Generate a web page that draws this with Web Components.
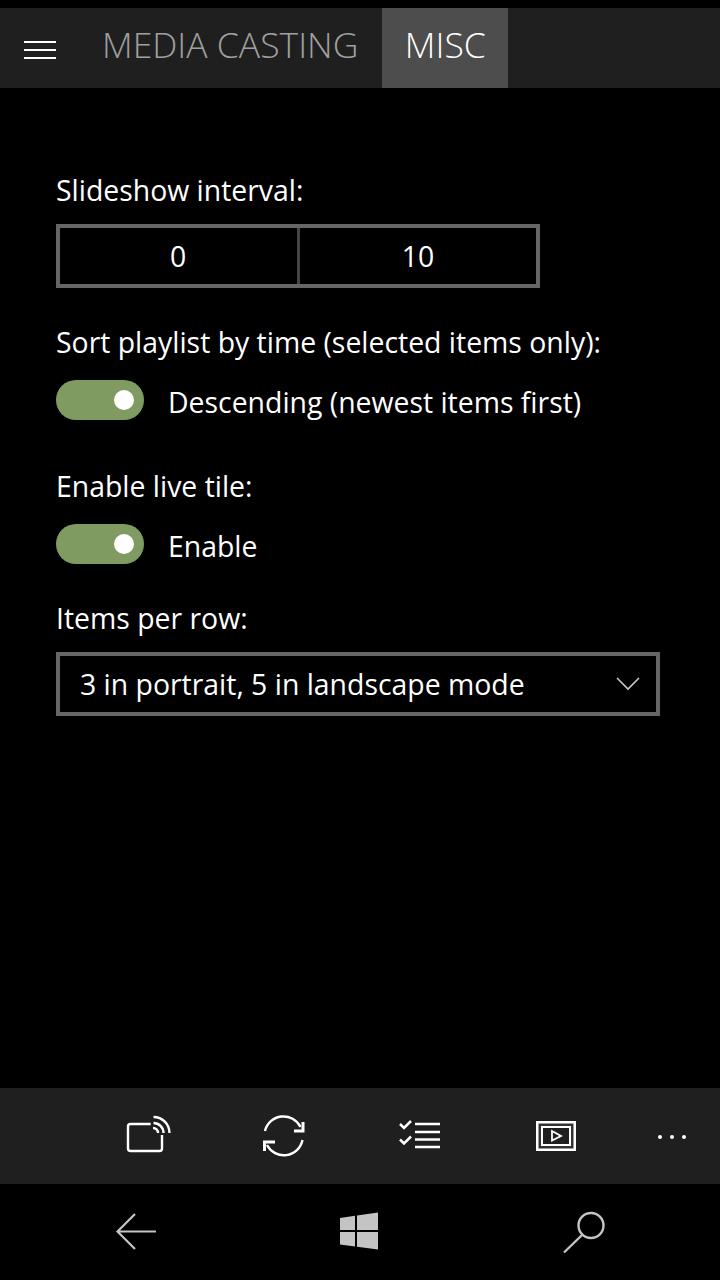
<!DOCTYPE html>
<html>
<head>
<meta charset="utf-8">
<style>
  html, body { margin: 0; padding: 0; background: #000; }
  body { font-family: "Open Sans", "Noto Sans", sans-serif; color: #fff; }
  app-page { height: 1280px; }
</style>
</head>
<body>
<app-page>
  <tab-bar slot="top">
    <tab-item>MEDIA CASTING</tab-item>
    <tab-item active>MISC</tab-item>
  </tab-bar>
  <set-label style="margin-top:82px">Slideshow interval:</set-label>
  <range-box style="margin-top:14px"><span>0</span><span>10</span></range-box>
  <set-label style="margin-top:34px">Sort playlist by time (selected items only):</set-label>
  <toggle-row style="margin-top:18px">Descending (newest items first)</toggle-row>
  <set-label style="margin-top:46px">Enable live tile:</set-label>
  <toggle-row style="margin-top:18px">Enable</toggle-row>
  <set-label style="margin-top:34px">Items per row:</set-label>
  <select-box style="margin-top:14px">3 in portrait, 5 in landscape mode</select-box>
  <command-bar slot="bottom"></command-bar>
  <nav-bar slot="bottom"></nav-bar>
</app-page>

<script>
class AppPage extends HTMLElement {
  constructor() {
    super()
    this.attachShadow({ mode: 'open' }).innerHTML = `
      <style>
        :host { display: flex; flex-direction: column; padding-top: 8px; box-sizing: border-box; }
        main { flex: 1; padding: 0 56px; display: flex; flex-direction: column; align-items: flex-start; }
      </style>
      <slot name="top"></slot>
      <main><slot></slot></main>
      <slot name="bottom"></slot>
    `
  }
}

class TabBar extends HTMLElement {
  constructor() {
    super()
    this.attachShadow({ mode: 'open' }).innerHTML = `
      <style>
        :host { display: flex; height: 80px; background: #1f1f1f; }
        .burger { width: 80px; padding-top: 4px; box-sizing: border-box; display: flex; align-items: center; justify-content: center; }
        .tabs { display: flex; }
      </style>
      <div class="burger">
        <svg width="32" height="20" viewBox="0 0 32 20" fill="#fff">
          <rect x="0" y="1" width="32" height="2"/>
          <rect x="0" y="9" width="32" height="2"/>
          <rect x="0" y="17" width="32" height="2"/>
        </svg>
      </div>
      <div class="tabs"><slot></slot></div>
    `
  }
}

class TabItem extends HTMLElement {
  constructor() {
    super()
    this.attachShadow({ mode: 'open' }).innerHTML = `
      <style>
        :host { display: flex; align-items: center; padding: 0 24px 8px 22px; font-size: 35.5px; font-weight: 300; color: #a0a0a0; white-space: nowrap; }
        :host([active]) { background: #4d4d4d; color: #fff; padding: 0 22.5px 8px; }
      </style>
      <slot></slot>
    `
  }
}

class SetLabel extends HTMLElement {
  constructor() {
    super()
    this.attachShadow({ mode: 'open' }).innerHTML = `
      <style>
        :host { display: block; height: 40px; line-height: 40px; font-size: 28.4px; white-space: nowrap; }
      </style>
      <slot></slot>
    `
  }
}

class RangeBox extends HTMLElement {
  constructor() {
    super()
    this.attachShadow({ mode: 'open' }).innerHTML = `
      <style>
        :host { display: grid; grid-template-columns: 1fr 1fr; width: 484px; height: 64px; box-sizing: border-box; border: 4px solid #666; font-size: 28.4px; text-align: center; line-height: 56px; position: relative; }
        :host::after { content: ''; position: absolute; left: 237px; top: 0; bottom: 0; width: 3px; background: #444; }
        ::slotted(:first-child) { padding-right: 2px; }
        ::slotted(:last-child) { padding-left: 2px; }
      </style>
      <slot></slot>
    `
  }
}

class ToggleRow extends HTMLElement {
  constructor() {
    super()
    this.attachShadow({ mode: 'open' }).innerHTML = `
      <style>
        :host { display: flex; align-items: center; gap: 24px; height: 40px; font-size: 28.4px; white-space: nowrap; }
        .track { width: 88px; height: 40px; border-radius: 20px; background: #7f9b62; display: flex; align-items: center; justify-content: flex-end; padding-right: 10px; box-sizing: border-box; }
        .knob { width: 20px; height: 20px; border-radius: 50%; background: #fff; }
        .text { padding-top: 4px; }
      </style>
      <div class="track"><div class="knob"></div></div>
      <div class="text"><slot></slot></div>
    `
  }
}

class SelectBox extends HTMLElement {
  constructor() {
    super()
    this.attachShadow({ mode: 'open' }).innerHTML = `
      <style>
        :host { display: flex; align-items: center; justify-content: space-between; width: 604px; height: 64px; box-sizing: border-box; border: 4px solid #666; padding: 0 16px 0 20px; font-size: 28.4px; white-space: nowrap; }
      </style>
      <slot></slot>
      <svg width="24" height="14" viewBox="0 0 24 14" fill="none" stroke="#c8c8c8" stroke-width="1.6"><path d="M1 1 L12 12 L23 1"/></svg>
    `
  }
}

class CommandBar extends HTMLElement {
  constructor() {
    super()
    this.attachShadow({ mode: 'open' }).innerHTML = `
      <style>
        :host { display: block; height: 96px; background: #1f1f1f; position: relative; }
        svg { position: absolute; fill: none; stroke: #fff; }
      </style>
      <svg style="left:123px;top:26px" width="50" height="44" viewBox="0 0 50 44" stroke-width="2.4">
        <path d="M27.7 10 H7.5 a2.5 2.5 0 0 0 -2.5 2.5 V34.5 a2.5 2.5 0 0 0 2.5 2.5 H36.5 a2.5 2.5 0 0 0 2.5 -2.5 V21"/>
        <path d="M30.5 3 A16 16 0 0 1 46.5 19"/>
        <path d="M30.5 9 A10 10 0 0 1 40.5 19"/>
        <path d="M30 14 A5 5 0 0 1 35 19"/>
      </svg>
      <svg style="left:262px;top:26px" width="44" height="44" viewBox="0 0 44 44" stroke-width="2.4">
        <path d="M3 17 A19 19 0 0 1 38.5 13"/>
        <path d="M41 8 V17 H32" stroke-width="3"/>
        <path d="M40.5 26 A19 19 0 0 1 5 31"/>
        <path d="M2.5 37 V28 H13" stroke-width="3"/>
      </svg>
      <svg style="left:398px;top:30px" width="44" height="36" viewBox="0 0 44 36" stroke-width="2.5">
        <path d="M2 6 L6 10 L13 3"/>
        <path d="M2 21.5 L6 25.5 L13 18.5"/>
        <path d="M17 6 H42 M17 14 H42 M17 21.5 H42 M17 29 H42"/>
      </svg>
      <svg style="left:536px;top:33px" width="40" height="30" viewBox="0 0 40 30">
        <rect x="1.25" y="1.25" width="37.5" height="27.5" stroke-width="2.5" fill="#333"/>
        <rect x="6" y="6" width="28" height="18" stroke-width="2" fill="#1f1f1f"/>
        <path d="M16 10 L25 15 L16 19.5 Z" stroke-width="1.8"/>
      </svg>
      <svg style="left:658px;top:46px" width="30" height="6" viewBox="0 0 30 6">
        <circle cx="2" cy="3" r="2" fill="#fff" stroke="none"/>
        <circle cx="14" cy="3" r="2" fill="#fff" stroke="none"/>
        <circle cx="26" cy="3" r="2" fill="#fff" stroke="none"/>
      </svg>
    `
  }
}

class NavBar extends HTMLElement {
  constructor() {
    super()
    this.attachShadow({ mode: 'open' }).innerHTML = `
      <style>
        :host { display: block; height: 96px; background: #000; position: relative; }
        svg { position: absolute; }
      </style>
      <svg style="left:115px;top:28px" width="44" height="40" viewBox="0 0 44 40" fill="none" stroke="#c4c4c4" stroke-width="2.2">
        <path d="M20 2 L2.5 19.5 L20 37 M2.5 19.5 H41"/>
      </svg>
      <svg style="left:339px;top:28px" width="40" height="40" viewBox="0 0 40 40" fill="#c4c4c4">
        <path d="M1 6 L16 3.8 V18 H1 Z M18 3.4 L39 0.5 V18 H18 Z M1 20 H16 V34.5 L1 32.5 Z M18 20 H39 V37.5 L18 34.8 Z"/>
      </svg>
      <svg style="left:562px;top:26px" width="46" height="44" viewBox="0 0 46 44" fill="none" stroke="#c4c4c4" stroke-width="2.4">
        <circle cx="29" cy="15.5" r="12.5"/>
        <path d="M20 25 L2 42.5"/>
      </svg>
    `
  }
}

customElements.define('app-page', AppPage)
customElements.define('tab-bar', TabBar)
customElements.define('tab-item', TabItem)
customElements.define('set-label', SetLabel)
customElements.define('range-box', RangeBox)
customElements.define('toggle-row', ToggleRow)
customElements.define('select-box', SelectBox)
customElements.define('command-bar', CommandBar)
customElements.define('nav-bar', NavBar)
</script>
</body>
</html>
